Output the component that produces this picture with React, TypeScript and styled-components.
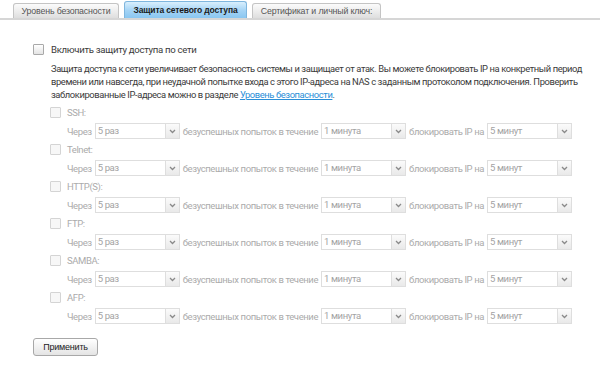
import React from 'react'
import styled, { createGlobalStyle } from 'styled-components'

const GlobalStyle = createGlobalStyle`
	html, body {
		margin: 0;
		padding: 0;
		background: #ffffff;
		font-family: Roboto, "Liberation Sans", sans-serif;
	}
`

const Page = styled.div`
	width: 600px;
	height: 372px;
	overflow: hidden;
	background: #fff;
`

const TabBar = styled.div`
	display: flex;
	align-items: flex-end;
	gap: 5px;
	height: 17px;
	padding: 1px 0 0 13px;
	border-bottom: 2px solid #d6d6d6;
`

const Tab = styled.div<{ active?: boolean; w: number }>`
	width: ${p => p.w}px;
	flex: none;
	height: ${p => (p.active ? 17 : 15)}px;
	box-sizing: border-box;
	display: flex;
	align-items: center;
	justify-content: center;
	overflow: hidden;
	font-family: "Liberation Sans", Arial, sans-serif;
	font-size: ${p => (p.active ? 8.5 : 8.8)}px;
	letter-spacing: -0.15px;
	font-weight: ${p => (p.active ? 'bold' : 'normal')};
	color: ${p => (p.active ? '#1a1a1a' : '#555')};
	border: 1px solid ${p => (p.active ? '#7fb6de' : '#c4c4c4')};
	border-bottom: none;
	border-radius: 3px 3px 0 0;
	background: ${p =>
		p.active
			? 'linear-gradient(#d9effd, #a3d3f5 55%, #8ac7f1)'
			: 'linear-gradient(#fbfbfb, #ececec 55%, #dedede)'};
	white-space: nowrap;
`

const Content = styled.div`
	padding: 22px 0 0 33px;
	font-size: 9.5px;
	letter-spacing: -0.4px;
	color: #3a3a3a;
`

const EnableRow = styled.label`
	display: flex;
	align-items: center;
	gap: 7px;
	height: 14px;
	font-size: 9.6px;
	letter-spacing: -0.3px;
`

const Box = styled.span<{ disabled?: boolean }>`
	display: inline-block;
	width: 9px;
	height: 9px;
	border: 1px solid ${p => (p.disabled ? '#d4d4d4' : '#a9a9a9')};
	background: ${p => (p.disabled ? '#f7f7f7' : 'linear-gradient(#ffffff, #e4e4e4)')};
	border-radius: 1px;
	flex: none;
`

const Description = styled.div`
	margin: 6px 0 0 18px;
	line-height: 13px;
	font-size: 9.4px;
	letter-spacing: -0.4px;
	color: #3a3a3a;
`

const Line = styled.span`
	display: block;
	white-space: nowrap;
`

const Link = styled.a`
	color: #2a8fd8;
	text-decoration: underline;
`

const Protocols = styled.div`
	margin: 1px 0 0 17px;
	display: flex;
	flex-direction: column;
`

const Group = styled.div`
	height: 37px;
	color: #ababab;
`

const GroupHead = styled.div`
	display: flex;
	align-items: center;
	gap: 6px;
	height: 14px;
	margin-top: 3px;
`

const RuleRow = styled.div`
	display: flex;
	align-items: center;
	gap: 3px;
	margin: 4px 0 0 17px;
	height: 16px;
	white-space: nowrap;
`

const Select = styled.div`
	width: 85px;
	flex: none;
	height: 16px;
	box-sizing: border-box;
	border: 1px solid #dedede;
	display: flex;
	align-items: stretch;
	background: #fff;
	color: #a3a3a3;
`

const SelectValue = styled.span`
	flex: 1;
	padding-left: 2px;
	line-height: 14px;
`

const Arrow = styled.span`
	width: 13px;
	border-left: 1px solid #dedede;
	background: linear-gradient(#fbfbfb, #e9e9e9);
	display: flex;
	align-items: center;
	justify-content: center;
`

const ApplyButton = styled.button`
	display: block;
	margin-top: 14px;
	width: 65px;
	height: 18px;
	padding: 0;
	font-family: "Liberation Sans", Arial, sans-serif;
	font-size: 9px;
	letter-spacing: -0.2px;
	color: #222;
	border: 1px solid #a8a8a8;
	border-radius: 3px;
	background: linear-gradient(#ffffff, #e4e4e4);
`

const Chevron = () => (
	<svg width="7" height="5" viewBox="0 0 7 5">
		<path d="M1 1 L3.5 3.5 L6 1" fill="none" stroke="#8a8a8a" strokeWidth="1.3" />
	</svg>
)

const Dropdown: React.FC<{ value: string }> = ({ value }) => (
	<Select>
		<SelectValue>{value}</SelectValue>
		<Arrow>
			<Chevron />
		</Arrow>
	</Select>
)

const protocols = ['SSH:', 'Telnet:', 'HTTP(S):', 'FTP:', 'SAMBA:', 'AFP:']

export default function App() {
	return (
		<Page>
			<GlobalStyle />
			<TabBar>
				<Tab w={106}>Уровень безопасности</Tab>
				<Tab w={123} active>
					Защита сетевого доступа
				</Tab>
				<Tab w={129}>Сертификат и личный ключ:</Tab>
			</TabBar>
			<Content>
				<EnableRow>
					<Box />
					Включить защиту доступа по сети
				</EnableRow>
				<Description>
					<Line>
						Защита доступа к сети увеличивает безопасность системы и защищает от атак. Вы можете блокировать IP на конкретный период
					</Line>
					<Line>
						времени или навсегда, при неудачной попытке входа с этого IP-адреса на NAS с заданным протоколом подключения. Проверить
					</Line>
					<Line>
						заблокированные IP-адреса можно в разделе <Link>Уровень безопасности</Link>.
					</Line>
				</Description>
				<Protocols>
					{protocols.map(name => (
						<Group key={name}>
							<GroupHead>
								<Box disabled />
								{name}
							</GroupHead>
							<RuleRow>
								Через
								<Dropdown value="5 раз" />
								безуспешных попыток в течение
								<Dropdown value="1 минута" />
								блокировать IP на
								<Dropdown value="5 минут" />
							</RuleRow>
						</Group>
					))}
				</Protocols>
				<ApplyButton>Применить</ApplyButton>
			</Content>
		</Page>
	)
}
